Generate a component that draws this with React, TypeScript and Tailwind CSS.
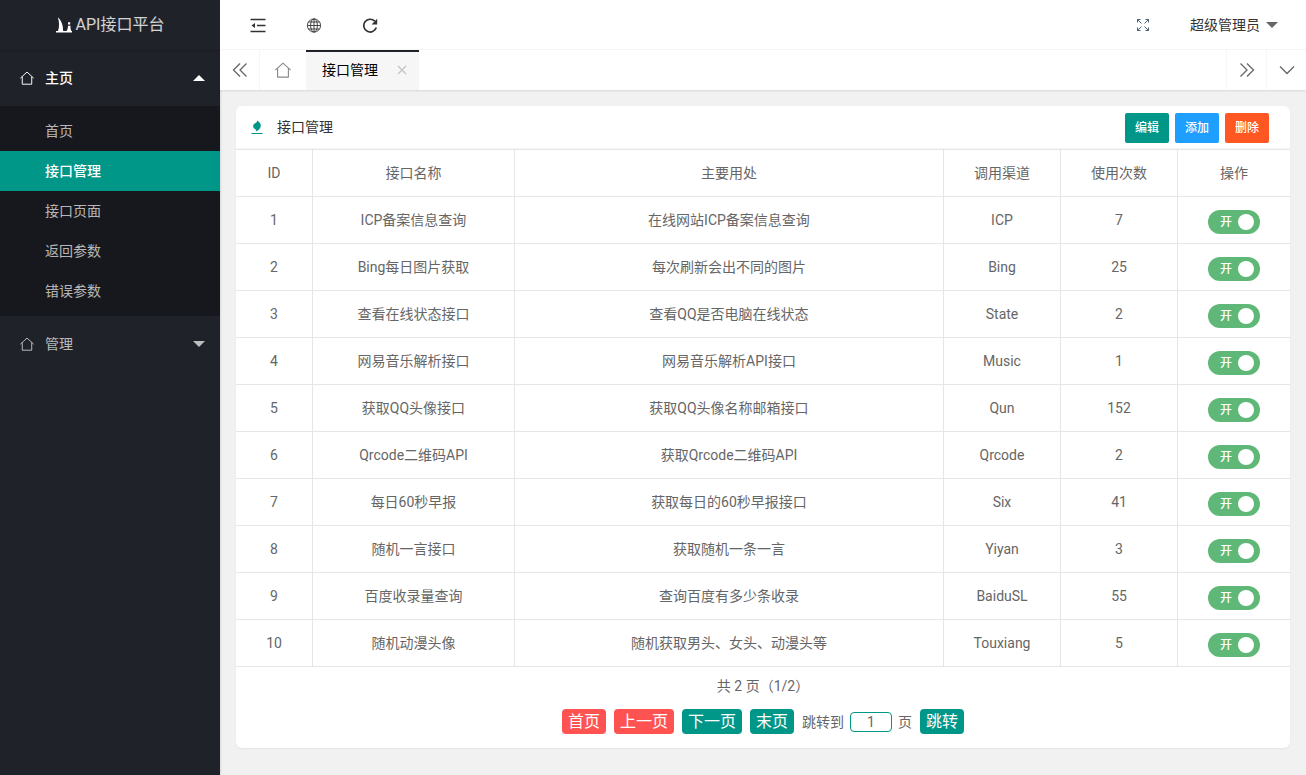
import React, { useState } from 'react';

interface ApiRow {
    id: number;
    name: string;
    usage: string;
    channel: string;
    count: number;
}

const rows: ApiRow[] = [
    { id: 1, name: 'ICP备案信息查询', usage: '在线网站ICP备案信息查询', channel: 'ICP', count: 7 },
    { id: 2, name: 'Bing每日图片获取', usage: '每次刷新会出不同的图片', channel: 'Bing', count: 25 },
    { id: 3, name: '查看在线状态接口', usage: '查看QQ是否电脑在线状态', channel: 'State', count: 2 },
    { id: 4, name: '网易音乐解析接口', usage: '网易音乐解析API接口', channel: 'Music', count: 1 },
    { id: 5, name: '获取QQ头像接口', usage: '获取QQ头像名称邮箱接口', channel: 'Qun', count: 152 },
    { id: 6, name: 'Qrcode二维码API', usage: '获取Qrcode二维码API', channel: 'Qrcode', count: 2 },
    { id: 7, name: '每日60秒早报', usage: '获取每日的60秒早报接口', channel: 'Six', count: 41 },
    { id: 8, name: '随机一言接口', usage: '获取随机一条一言', channel: 'Yiyan', count: 3 },
    { id: 9, name: '百度收录量查询', usage: '查询百度有多少条收录', channel: 'BaiduSL', count: 55 },
    { id: 10, name: '随机动漫头像', usage: '随机获取男头、女头、动漫头等', channel: 'Touxiang', count: 5 },
];

const subMenu = ['首页', '接口管理', '接口页面', '返回参数', '错误参数'];

const HomeIcon: React.FC<{ className: string }> = ({ className }) => (
    <svg viewBox="0 0 16 16" className={className} fill="none" stroke="currentColor" strokeWidth="1.1" strokeLinejoin="round">
        <path d="M0.400 8.200 8 1.200l7.600 7M2.600 6.400v8.700h10.800V6.400" />
    </svg>
);

const Logo = () => (
    <svg viewBox="0 0 16 16" className="h-4 w-4" fill="currentColor">
        <path d="M1.800 0.300c3.600 3 5.200 7.500 5.400 13.700H2c1.500-4 1.400-9.200-.2-13.700zM0 14h16v1.400H0zM12 5.300h2.200v2.200H12zM12 8.800h2.500c-.1 2.200.1 3.900 1 5.200h-5c1-1.300 1.500-3 1.500-5.200z" />
    </svg>
);

const ShrinkIcon = () => (
    <svg viewBox="0 0 16 16" className="h-4 w-4" fill="none" stroke="currentColor" strokeWidth="1.400">
        <path d="M0.500 2.500h15M7 8.500h8.500M0.500 14.500h15" />
        <path d="M5 6v5L1.500 8.500z" fill="currentColor" stroke="none" />
    </svg>
);

const GlobeIcon = () => (
    <svg viewBox="0 0 16 16" className="h-4 w-4" fill="none" stroke="currentColor" strokeWidth="0.900">
        <circle cx="8" cy="8.500" r="6.600" />
        <ellipse cx="8" cy="8.500" rx="3.400" ry="6.600" />
        <path d="M8 2v13M1.500 8.500h13M2.600 5h10.800M2.600 12h10.800" />
    </svg>
);

const RefreshIcon = () => (
    <svg viewBox="0 0 16 16" className="h-4 w-4" fill="none" stroke="currentColor" strokeWidth="1.700">
        <path d="M14.300 10.600A6.400 6.400 0 1 1 12.800 4.200" />
        <path d="M15.200 1.800v5.700H9.500z" fill="currentColor" stroke="none" />
    </svg>
);

const FullscreenIcon = () => (
    <svg viewBox="0 0 14 14" className="h-3.5 w-3.5" fill="none" stroke="currentColor" strokeWidth="1">
        <path d="M1.500 4.500v-3h3M1.500 1.500l4 4M9.500 1.500h3v3M12.500 1.500l-4 4M1.500 9.500v3h3M1.500 12.500l4-4M12.500 9.500v3h-3M12.500 12.500l-4-4" />
    </svg>
);

const DoubleChevron: React.FC<{ className?: string }> = ({ className = '' }) => (
    <svg viewBox="0 0 16 16" className={`h-4 w-4 ${className}`} fill="none" stroke="currentColor" strokeWidth="1.300">
        <path d="M8 1.500 1.500 8 8 14.500M14.500 1.500 8 8l6.500 6.500" />
    </svg>
);

const FireIcon = () => (
    <svg viewBox="0 0 12 14" className="h-3.5 w-3" fill="currentColor">
        <path d="M6.200 0c.2 1.400 3.600 2.200 3.600 5.400 0 3.100-2.300 4.800-4.800 6.100.5-1.300.1-1.900-1-2.600C2.500 8 1.900 7 2.200 5.400 2.600 3.100 6.700 3.200 6.200 0z" />
        <path d="M0.500 13h11v1h-11z" />
    </svg>
);

const Caret: React.FC<{ up?: boolean }> = ({ up }) => (
    <svg viewBox="0 0 12 6" className="h-1.5 w-3" fill="currentColor">
        <path d={up ? 'M0 6 6 0l6 6z' : 'M0 0h12L6 6z'} />
    </svg>
);

const Sidebar = () => (
    <aside className="w-[220px] shrink-0 bg-[#20222a] text-white/70 shadow-[1px_0_2px_rgba(0,0,0,0.1)]">
        <div className="flex h-[50px] items-center justify-center gap-1 text-base text-white/80 shadow-[0_1px_2px_rgba(0,0,0,0.15)]">
            <span className="text-white"><Logo /></span>
            <h1>API接口平台</h1>
        </div>
        <nav>
            <button className="flex h-14 w-full items-center pr-[15px] pl-5 text-white">
                <HomeIcon className="h-3.5 w-3.5" />
                <span className="ml-[11px] flex-1 text-left font-medium">主页</span>
                <Caret up />
            </button>
            <ul className="bg-[#17181d] py-[5px]">
                {subMenu.map((item) => (
                    <li key={item}>
                        <a
                            href="#"
                            className={item === '接口管理'
                                ? 'flex h-10 items-center bg-[#009688] pl-[45px] font-medium text-white'
                                : 'flex h-10 items-center pl-[45px]'}
                        >
                            {item}
                        </a>
                    </li>
                ))}
            </ul>
            <button className="flex h-14 w-full items-center pr-[15px] pl-5">
                <HomeIcon className="h-3.5 w-3.5" />
                <span className="ml-[11px] flex-1 text-left">管理</span>
                <Caret />
            </button>
        </nav>
    </aside>
);

const TopBar = () => (
    <header className="flex h-[50px] items-center justify-between border-b border-[#f6f6f6] bg-white pr-7 pl-[30px] text-[#333]">
        <div className="flex items-center gap-10">
            <button aria-label="侧边伸缩"><ShrinkIcon /></button>
            <button aria-label="前台"><GlobeIcon /></button>
            <button aria-label="刷新"><RefreshIcon /></button>
        </div>
        <div className="flex items-center gap-10">
            <button aria-label="全屏" className="text-[#4a6478]"><FullscreenIcon /></button>
            <button className="flex items-center gap-1.5">
                超级管理员
                <span className="text-[#666]"><Caret /></span>
            </button>
        </div>
    </header>
);

const TabBar = () => (
    <div className="flex h-10 bg-white text-[#666] shadow-[0_1px_2px_rgba(0,0,0,0.1)]">
        <button aria-label="向左" className="flex w-10 items-center justify-center border-r border-[#f6f6f6]"><DoubleChevron /></button>
        <button aria-label="主页" className="flex w-[46px] items-center justify-center text-[#888]"><HomeIcon className="h-4 w-4" /></button>
        <div className="flex w-[113px] items-center justify-between border-t-2 border-[#20222a] bg-[#f6f6f6] pr-3 pb-0.5 pl-4 text-black">
            <span>接口管理</span>
            <button aria-label="关闭" className="text-[#c2c2c2]">
                <svg viewBox="0 0 10 10" className="h-2.5 w-2.5" fill="none" stroke="currentColor" strokeWidth="1.200"><path d="m1 1 8 8M9 1 1 9" /></svg>
            </button>
        </div>
        <div className="flex-1" />
        <button aria-label="向右" className="flex w-10 items-center justify-center border-l border-[#f6f6f6]"><DoubleChevron className="rotate-180" /></button>
        <button aria-label="更多" className="flex w-10 items-center justify-center border-l border-[#f6f6f6]">
            <svg viewBox="0 0 16 16" className="h-4 w-4" fill="none" stroke="currentColor" strokeWidth="1.300"><path d="m1 4.500 7 7 7-7" /></svg>
        </button>
    </div>
);

const Toggle: React.FC<{ label: string }> = ({ label }) => {
    const [on, setOn] = useState(true);
    return (
        <label className="mt-1 inline-flex h-6 w-[52px] cursor-pointer items-center justify-between rounded-full bg-[#5fb878] pr-1.5 pl-3 align-middle text-xs font-medium text-white">
            <input type="checkbox" className="sr-only" aria-label={label} checked={on} onChange={() => setOn(!on)} />
            <span>{on ? '开' : '关'}</span>
            <span className="h-4 w-4 rounded-full bg-white" />
        </label>
    );
};

const Pagination = () => (
    <div className="flex flex-col items-center pt-[9px] pb-3.5">
        <p className="leading-5">共 2 页（1/2）</p>
        <div className="mt-[13px] flex items-center gap-2 text-base text-white">
            <button className="h-[25px] rounded bg-[#ff5351] px-1.5">首页</button>
            <button className="h-[25px] rounded bg-[#ff5351] px-1.5">上一页</button>
            <button className="h-[25px] rounded bg-[#009688] px-1.5">下一页</button>
            <button className="h-[25px] rounded bg-[#009688] px-1.5">末页</button>
            <label className="flex items-center gap-1.5 text-sm text-[#666]">
                跳转到
                <input type="text" defaultValue="1" className="h-5 w-[42px] rounded border border-[#009688] text-center text-sm text-[#666] outline-none" />
                页
            </label>
            <button className="h-[25px] rounded bg-[#009688] px-1.5">跳转</button>
        </div>
    </div>
);

const cell = 'border-r border-b border-[#e6e6e6] text-center font-normal last:border-r-0';

const App = () => (
    <div className="flex min-h-screen bg-[#f1f1f1] font-[Roboto,'Noto_Sans_CJK_SC',sans-serif] text-sm text-[#666]">
        <Sidebar />
        <div className="flex min-w-0 flex-1 flex-col">
            <TopBar />
            <TabBar />
            <main className="p-4">
                <section className="overflow-hidden rounded-md bg-white shadow-[0_1px_2px_rgba(0,0,0,0.05)]">
                    <div className="flex h-[43px] items-center border-b border-[#f6f6f6] pr-[21px] pl-[15px] text-[#333]">
                        <span className="text-[#009688]"><FireIcon /></span>
                        <h2 className="ml-3.5 flex-1">接口管理</h2>
                        <div className="flex gap-1.5 pt-0.5 text-xs font-medium text-white">
                            <button className="h-[30px] rounded-xs bg-[#009688] px-2.5">编辑</button>
                            <button className="h-[30px] rounded-xs bg-[#1e9fff] px-2.5">添加</button>
                            <button className="h-[30px] rounded-xs bg-[#ff5722] px-2.5">删除</button>
                        </div>
                    </div>
                    <table className="w-full table-fixed border-separate border-spacing-0">
                        <thead>
                            <tr>
                                <th className={`h-12 w-[77px] border-t ${cell}`}>ID</th>
                                <th className={`w-[202px] border-t ${cell}`}>接口名称</th>
                                <th className={`border-t ${cell}`}>主要用处</th>
                                <th className={`w-[117px] border-t ${cell}`}>调用渠道</th>
                                <th className={`w-[117px] border-t ${cell}`}>使用次数</th>
                                <th className={`w-[112px] border-t ${cell}`}>操作</th>
                            </tr>
                        </thead>
                        <tbody>
                            {rows.map((row) => (
                                <tr key={row.id}>
                                    <td className={`h-[47px] ${cell}`}>{row.id}</td>
                                    <td className={cell}>{row.name}</td>
                                    <td className={cell}>{row.usage}</td>
                                    <td className={cell}>{row.channel}</td>
                                    <td className={cell}>{row.count}</td>
                                    <td className={cell}><Toggle label={row.name} /></td>
                                </tr>
                            ))}
                        </tbody>
                    </table>
                    <Pagination />
                </section>
            </main>
        </div>
    </div>
);

export default App;
